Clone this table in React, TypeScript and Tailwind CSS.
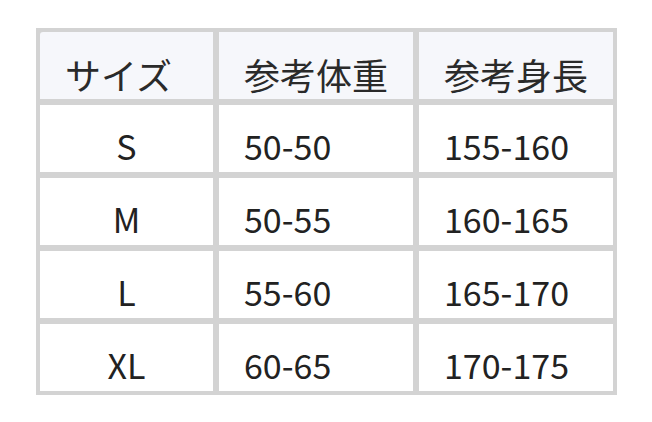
import React from "react";

const rows = [
  ["S", "50-50", "155-160"],
  ["M", "50-55", "160-165"],
  ["L", "55-60", "165-170"],
  ["XL", "60-65", "170-175"],
];

export default function App() {
  return (
    <div
      className="w-[652px] h-[422px] bg-white pt-[28px] pl-[36px]"
      style={{ fontFamily: '"Noto Sans CJK JP", "Noto Sans", sans-serif' }}
    >
      <div className="inline-grid grid-cols-[173px_194px_194px] auto-rows-[67px] gap-[6px] p-[4px] bg-[#d3d3d3] text-[34px] leading-none text-[#222]">
        <div className="bg-[#f6f7fb] rounded-tl-[3px] flex items-end pl-[25px] pb-[7px] text-[36px] text-[#2a2a2a]">サイズ</div>
        <div className="bg-[#f6f7fb] flex items-end pl-[25px] pb-[7px] text-[36px] text-[#2a2a2a]">参考体重</div>
        <div className="bg-[#f6f7fb] flex items-end pl-[25px] pb-[7px] text-[36px] text-[#2a2a2a]">参考身長</div>
        {rows.map((r) => (
          <React.Fragment key={r[0]}>
            <div className="bg-white flex items-end justify-center pb-[9px]">{r[0]}</div>
            <div className="bg-white flex items-end pl-[25px] pb-[9px]">{r[1]}</div>
            <div className="bg-white flex items-end pl-[25px] pb-[9px]">{r[2]}</div>
          </React.Fragment>
        ))}
      </div>
    </div>
  );
}
